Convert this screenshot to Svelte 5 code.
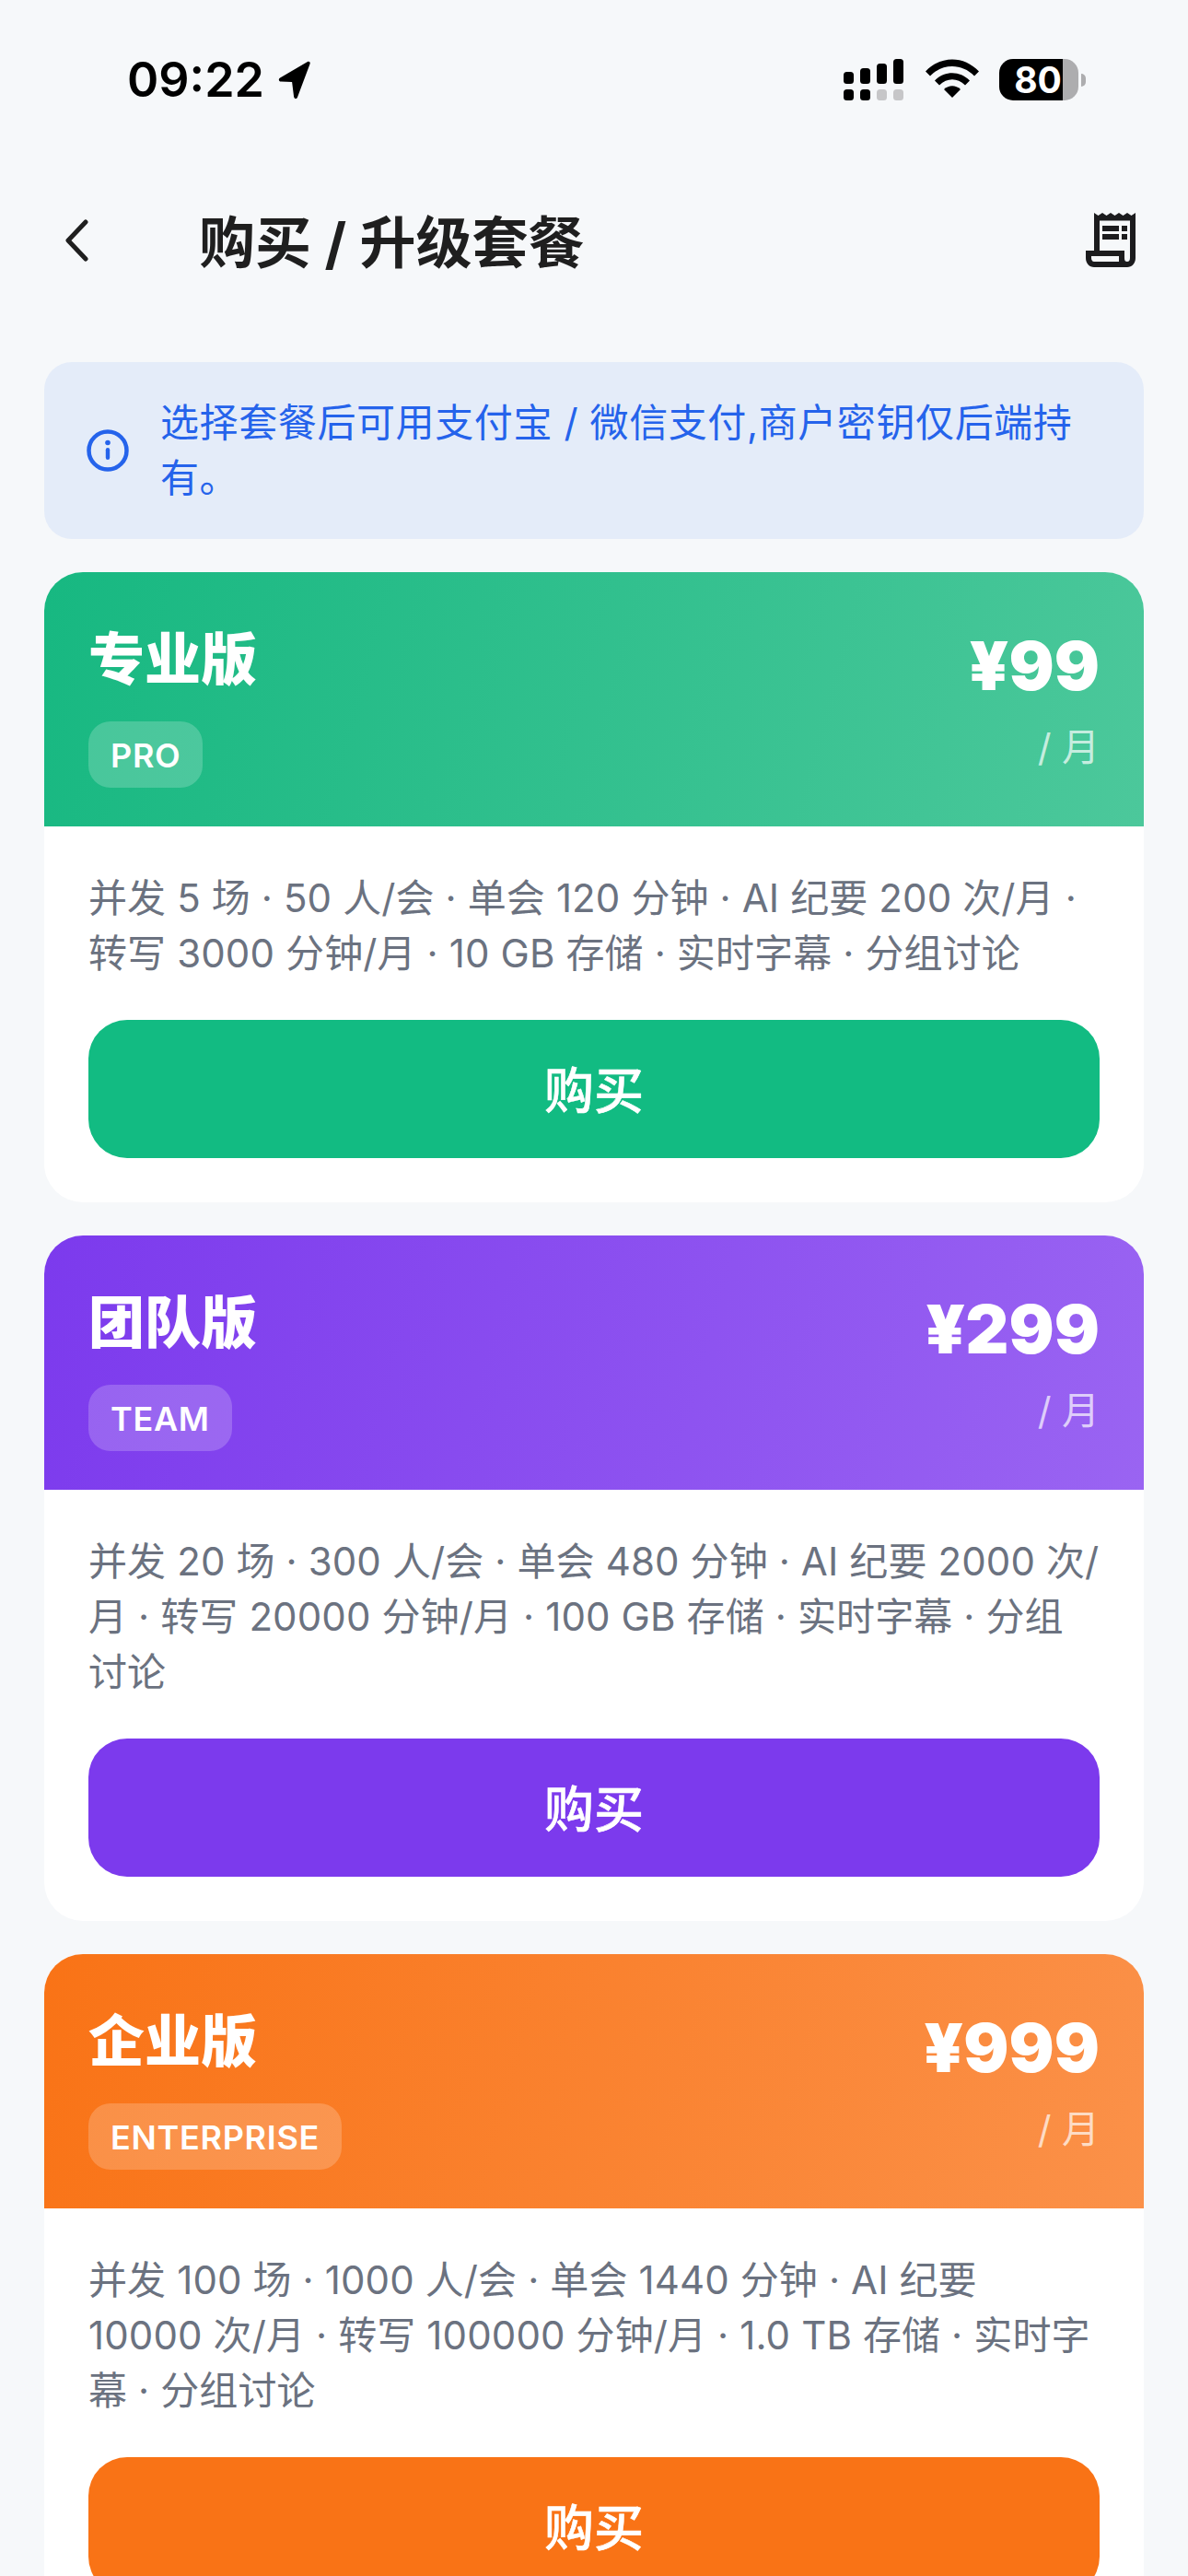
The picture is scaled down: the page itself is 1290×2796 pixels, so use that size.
<script>
  const plans = [
    { name: '专业版', tag: 'PRO', price: '¥99', cls: 'pro', desc: '并发 5 场 · 50 人/会 · 单会 120 分钟 · AI 纪要 200 次/月 · 转写 3000 分钟/月 · 10 GB 存储 · 实时字幕 · 分组讨论' },
    { name: '团队版', tag: 'TEAM', price: '¥299', cls: 'team', desc: '并发 20 场 · 300 人/会 · 单会 480 分钟 · AI 纪要 2000 次/月 · 转写 20000 分钟/月 · 100 GB 存储 · 实时字幕 · 分组讨论' },
    { name: '企业版', tag: 'ENTERPRISE', price: '¥999', cls: 'ent', desc: '并发 100 场 · 1000 人/会 · 单会 1440 分钟 · AI 纪要 10000 次/月 · 转写 100000 分钟/月 · 1.0 TB 存储 · 实时字幕 · 分组讨论' }
  ];
</script>

<div class="page">
  <div class="status">
    <div class="time">09:22
      <svg class="loc" width="41" height="42" viewBox="0 0 34 42"><path d="M31.500 1 C33.500 0.300 34.800 1.800 34 3.600 L20.500 39.500 C19.600 41.800 17 41.400 16.600 39 L14.600 23 L2.500 22.500 C0 22.200 -0.400 19.600 1.600 18.400 Z" fill="#000"/></svg>
    </div>
    <div class="sicons">
      <svg width="66" height="46" viewBox="0 0 66 46">
        <g fill="#000"><rect x="0" y="14" width="11" height="13" rx="3.5"/><rect x="18" y="10" width="11" height="17" rx="3.5"/><rect x="36" y="5" width="11" height="22" rx="3.5"/><rect x="54" y="0" width="11" height="27" rx="3.5"/><rect x="0" y="33" width="11" height="12" rx="3.5"/><rect x="18" y="33" width="11" height="12" rx="3.5"/></g>
        <g fill="#c6c6c8"><rect x="36" y="33" width="11" height="12" rx="3.5"/><rect x="54" y="33" width="11" height="12" rx="3.5"/></g>
      </svg>
      <svg class="wifi" width="58" height="42" viewBox="0 0 58 42"><g fill="#000"><path d="M0 13.5 C16 -4 42 -4 58 13.5 L53 18.5 C39.5 4.5 18.5 4.5 5 18.5 Z"/><path d="M10 23.5 C20.5 12.5 37.5 12.5 48 23.5 L43 28.5 C34.5 20 23.5 20 15 28.5 Z"/><path d="M20 33 C25.5 28 32.5 28 38 33 L29 42 Z"/></g></svg>
      <div class="bat"><div class="batbody"><span>80</span></div><div class="nub"></div></div>
    </div>
  </div>

  <header class="nav">
    <svg class="back" width="26" height="46" viewBox="0 0 26 46"><path d="M23 3 L4 23 L23 43" fill="none" stroke="#1f1f1f" stroke-width="5" stroke-linecap="round" stroke-linejoin="round"/></svg>
    <h1>购买 / 升级套餐</h1>
    <svg class="receipt" width="54" height="60" viewBox="0 0 54 60">
      <path d="M9 1 L13.5 4 L18 1 L22.5 4 L27 1 L31.5 4 L36 1 L40.5 4 L45 1 L49.5 4 L54 1 V50 C54 56 50 60 45 60 H9 C4 60 0 56 0 50 V42 H9 Z" fill="#1c1c1e"/>
      <path d="M15 9.5 H48 V50 C48 53 46.5 54 45 54 C43 54 42 53 42 50 V42 H15 Z" fill="#f6f8fa"/>
      <path d="M6 48 H36 V54 H9 C7 54 6 52 6 50 Z" fill="#f6f8fa"/>
      <g fill="#1c1c1e"><rect x="18" y="15" width="18" height="6"/><rect x="18" y="24" width="18" height="6"/><rect x="39" y="15" width="6" height="6"/><rect x="39" y="24" width="6" height="6"/></g>
    </svg>
  </header>

  <main class="content">
    <div class="notice">
      <svg class="info" width="46" height="46" viewBox="0 0 46 46"><circle cx="23" cy="23" r="20.5" fill="none" stroke="#2563eb" stroke-width="4.5"/><circle cx="23" cy="14.5" r="2.8" fill="#2563eb"/><rect x="20.8" y="20" width="4.4" height="13" rx="2.2" fill="#2563eb"/></svg>
      <p>选择套餐后可用支付宝 / 微信支付,商户密钥仅后端持有。</p>
    </div>

    {#each plans as plan}
      <section class="card {plan.cls}">
        <div class="head">
          <div class="hl">
            <h2>{plan.name}</h2>
            <span class="tag">{plan.tag}</span>
          </div>
          <div class="hr">
            <div class="price">{plan.price}</div>
            <div class="per">/ 月</div>
          </div>
        </div>
        <div class="body">
          <p>{plan.desc}</p>
          <button>购买</button>
        </div>
      </section>
    {/each}
  </main>
</div>

<style>
  :global(body) { margin: 0; background: #f6f8fa; }
  .page {
    width: 1290px; height: 2796px; overflow: hidden; background: #f6f8fa;
    font-family: Inter, "Noto Sans CJK SC", sans-serif;
  }
  .status { height: 177px; box-sizing: border-box; padding: 60px 112px 0 138px; display: flex; justify-content: space-between; align-items: flex-start; }
  .time { display: flex; align-items: center; font-size: 52px; line-height: 54px; font-weight: 600; color: #000; gap: 12px; height: 54px; }
  .sicons { display: flex; align-items: flex-start; gap: 24px; padding-top: 4px; margin-right: -1px; }
  .wifi { margin-left: -1px; }
  .bat { display: flex; align-items: center; gap: 3px; margin-left: -2px; }
  .batbody { width: 86px; height: 45px; border-radius: 15px; overflow: hidden; background: linear-gradient(90deg, #000 80%, #adadaf 80%); position: relative; }
  .batbody span { position: absolute; left: 16px; top: 0; width: 52px; text-align: center; line-height: 45px; font-size: 39px; font-weight: 700; color: #fff; font-family: Inter, sans-serif; }
  .nub { width: 5px; height: 14px; background: #adadaf; border-radius: 0 7px 7px 0; }

  .nav { height: 174px; padding: 0 57px 0 70px; display: flex; align-items: center; box-sizing: border-box; }
  .back { flex: none; margin-bottom: 6px; }
  h1 { margin: 0 0 0 120px; font-size: 61px; line-height: 84px; font-weight: 700; color: #1f1f1f; flex: 1; }
  .receipt { flex: none; margin-bottom: 8px; }

  .content { padding: 42px 48px 0; display: flex; flex-direction: column; gap: 36px; }
  .notice { background: #e4ecf9; border-radius: 30px; height: 192px; box-sizing: border-box; padding: 36px 48px 36px 46px; display: flex; align-items: center; gap: 34px; }
  .notice p { margin: 0; font-size: 42px; line-height: 60px; color: #2563eb; letter-spacing: .6px; }
  .info { flex: none; }

  .card { background: #fff; border-radius: 42px; overflow: hidden; flex: none; }
  .head { height: 276px; box-sizing: border-box; padding: 53px 48px 0; display: flex; justify-content: space-between; color: #fff; }
  .pro .head { background: linear-gradient(105deg, #17b881, #4cc89b); }
  .team .head { background: linear-gradient(105deg, #7c3aed, #9a64f2); }
  .ent .head { background: linear-gradient(105deg, #f97316, #fb9149); }
  h2 { margin: 0; font-size: 61px; line-height: 84px; font-weight: 900; }
  .tag { display: inline-block; margin-top: 25px; height: 72px; line-height: 74px; padding: 0 24px; border-radius: 24px; background: rgba(255,255,255,.2); font-size: 36px; font-weight: 600; letter-spacing: .7px; }
  .hr { text-align: right; }
  .price { font-size: 73px; line-height: 90px; font-weight: 900; margin-top: 4px; }
  .per { margin-top: 16px; font-size: 41px; line-height: 54px; color: rgba(255,255,255,.7); font-weight: 400; }

  .body { padding: 48px; }
  .body p { margin: 0; font-size: 42px; line-height: 60px; color: #6b7280; letter-spacing: .12px; }
  button { display: block; width: 100%; height: 150px; margin-top: 42px; padding: 0 0 3px; border: 0; border-radius: 42px; color: #fff; font: 500 54px Inter, "Noto Sans CJK SC", sans-serif; -webkit-text-stroke: .5px #fff; }
  .pro button { background: #12bb82; }
  .team button { background: #7c3aed; }
  .ent button { background: #f97316; }
</style>
